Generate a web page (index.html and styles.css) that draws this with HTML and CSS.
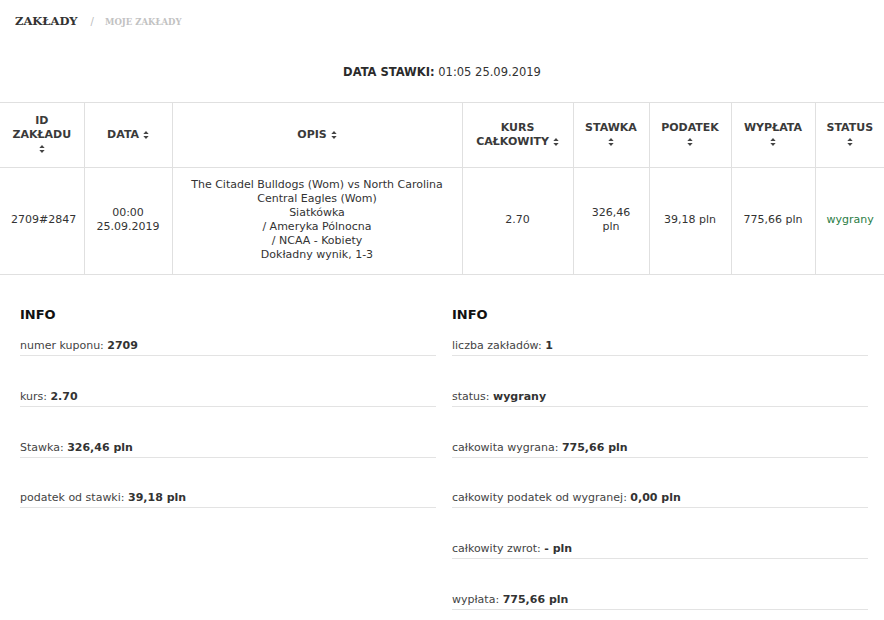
FILE: index.html
```html
<!DOCTYPE html>
<html>
<head>
  <meta charset="UTF-8">
  <title>Moje zakłady</title>
  <link rel="stylesheet" href="styles.css">
</head>
<body>
  <div class="breadcrumb">
    <span class="crumb-main">ZAKŁADY</span>
    <span class="crumb-sep">/</span>
    <span class="crumb-sub">MOJE ZAKŁADY</span>
  </div>

  <p class="bet-date"><b>DATA STAWKI:</b> 01:05 25.09.2019</p>

  <table class="bets-table">
    <colgroup>
      <col class="c-id"><col class="c-date"><col class="c-desc"><col class="c-odds">
      <col class="c-stake"><col class="c-tax"><col class="c-payout"><col class="c-status">
    </colgroup>
    <thead>
      <tr>
        <th>ID ZAKŁADU <span class="sort"><svg viewBox="0 0 6 9"><path d="M3 0L6 3.5H0z M3 9L0 5.5H6z"/></svg></span></th>
        <th>DATA <span class="sort"><svg viewBox="0 0 6 9"><path d="M3 0L6 3.5H0z M3 9L0 5.5H6z"/></svg></span></th>
        <th>OPIS <span class="sort"><svg viewBox="0 0 6 9"><path d="M3 0L6 3.5H0z M3 9L0 5.5H6z"/></svg></span></th>
        <th>KURS CAŁKOWITY <span class="sort"><svg viewBox="0 0 6 9"><path d="M3 0L6 3.5H0z M3 9L0 5.5H6z"/></svg></span></th>
        <th>STAWKA <span class="sort"><svg viewBox="0 0 6 9"><path d="M3 0L6 3.5H0z M3 9L0 5.5H6z"/></svg></span></th>
        <th>PODATEK <span class="sort"><svg viewBox="0 0 6 9"><path d="M3 0L6 3.5H0z M3 9L0 5.5H6z"/></svg></span></th>
        <th>WYPŁATA <span class="sort"><svg viewBox="0 0 6 9"><path d="M3 0L6 3.5H0z M3 9L0 5.5H6z"/></svg></span></th>
        <th>STATUS <span class="sort"><svg viewBox="0 0 6 9"><path d="M3 0L6 3.5H0z M3 9L0 5.5H6z"/></svg></span></th>
      </tr>
    </thead>
    <tbody>
      <tr>
        <td>2709#2847</td>
        <td>00:00<br>25.09.2019</td>
        <td>The Citadel Bulldogs (Wom) vs North Carolina Central Eagles (Wom)<br>Siatkówka<br>/ Ameryka Pólnocna<br>/ NCAA - Kobiety<br>Dokładny wynik, 1-3</td>
        <td>2.70</td>
        <td>326,46<br>pln</td>
        <td>39,18 pln</td>
        <td>775,66 pln</td>
        <td class="won">wygrany</td>
      </tr>
    </tbody>
  </table>

  <div class="info-wrap">
    <div class="info-col">
      <h3 class="info-title">INFO</h3>
      <div class="info-row">numer kuponu: <b>2709</b></div>
      <div class="info-row">kurs: <b>2.70</b></div>
      <div class="info-row">Stawka: <b>326,46 pln</b></div>
      <div class="info-row">podatek od stawki: <b>39,18 pln</b></div>
    </div>
    <div class="info-col">
      <h3 class="info-title">INFO</h3>
      <div class="info-row">liczba zakładów: <b>1</b></div>
      <div class="info-row">status: <b>wygrany</b></div>
      <div class="info-row">całkowita wygrana: <b>775,66 pln</b></div>
      <div class="info-row">całkowity podatek od wygranej: <b>0,00 pln</b></div>
      <div class="info-row">całkowity zwrot: <b>- pln</b></div>
      <div class="info-row">wypłata: <b>775,66 pln</b></div>
    </div>
  </div>
</body>
</html>
```

FILE: styles.css
```css
body {
  margin: 0;
  font-family: 'DejaVu Sans', 'Noto Sans', sans-serif;
  font-size: 11px;
  color: #333;
  background: #fff;
}

.breadcrumb {
  padding: 14px 15px 0;
  height: 20px;
  display: flex;
  align-items: baseline;
}
.crumb-main {
  font-family: 'DejaVu Serif', serif;
  font-weight: bold;
  font-size: 11.5px;
  color: #333;
}
.crumb-sep {
  margin: 0 11px 0 13px;
  color: #bbb;
  font-size: 10px;
}
.crumb-sub {
  font-family: 'DejaVu Serif', serif;
  font-weight: bold;
  font-size: 8.5px;
  color: #c2c2c2;
}

.bet-date {
  margin: 31px 0 23px;
  text-align: center;
  font-size: 11.5px;
  color: #333;
}
.bet-date b {
  color: #2b2b2b;
}

.bets-table {
  width: 100%;
  border-collapse: collapse;
  table-layout: fixed;
}
.c-id { width: 84px; }
.c-date { width: 88px; }
.c-desc { width: 290px; }
.c-odds { width: 111px; }
.c-stake { width: 76px; }
.c-tax { width: 82px; }
.c-payout { width: 84px; }

.bets-table th,
.bets-table td {
  border: 1px solid #e0e0e0;
  text-align: center;
  vertical-align: middle;
  line-height: 14px;
  padding: 11px;
}
.bets-table td {
  padding: 10px 11px 12px;
}
.bets-table tr > :first-child { border-left: none; }
.bets-table tr > :last-child { border-right: none; }
.bets-table th {
  font-weight: bold;
  color: #3a3a3a;
}
.sort svg {
  width: 6px;
  height: 8px;
  fill: #444;
  vertical-align: -1px;
}
.won {
  color: #2a7d45;
}

.info-wrap {
  display: flex;
  gap: 16px;
  padding: 0 16px 0 20px;
  margin-top: 31px;
}
.info-col {
  flex: 1;
}
.info-title {
  margin: 0 0 15px;
  font-size: 13px;
  line-height: 18px;
  color: #111;
}
.info-row {
  line-height: 14px;
  padding-bottom: 2px;
  border-bottom: 1px solid #e3e3e3;
  margin-bottom: 33.8px;
  color: #444;
}
.info-row b {
  color: #333;
}
```
